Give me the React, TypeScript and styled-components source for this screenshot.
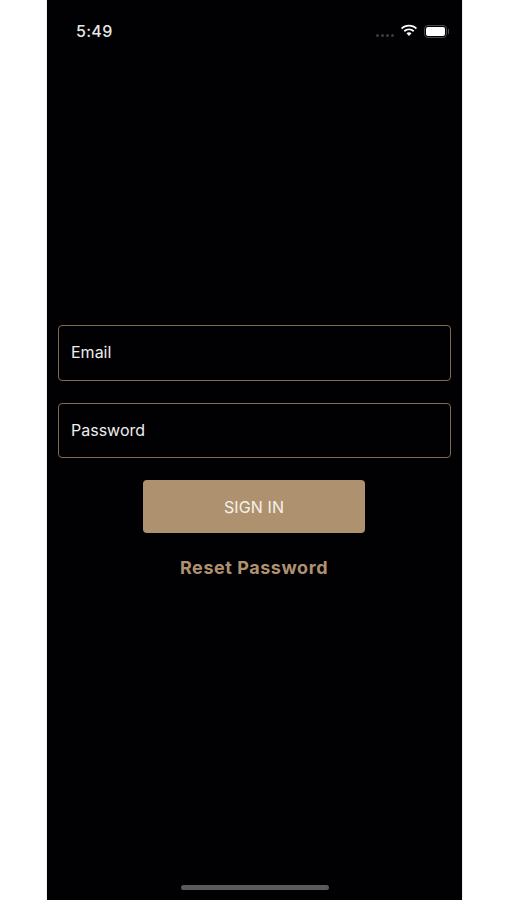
import type { FC } from "react";
import styled, { createGlobalStyle } from "styled-components";

const GlobalStyle = createGlobalStyle`
  html, body {
    margin: 0;
    padding: 0;
    background: #ffffff;
    font-family: Inter, "Liberation Sans", sans-serif;
  }
`;

const App: FC = () => {
  return (
    <>
      <GlobalStyle />
      <Page>
        <Phone>
          <StatusBar>
            <Time>5:49</Time>
            <StatusIcons>
              <Signal>
                <i />
                <i />
                <i />
                <i />
              </Signal>
              <svg width="18" height="14" viewBox="0 0 18 14">
                <path
                  d="M9 2.6c2.6 0 5 1 6.8 2.7l1.2-1.3C14.9 2 12.1.8 9 .8S3.1 2 1 4l1.2 1.3C4 3.6 6.4 2.6 9 2.6z"
                  fill="#fff"
                />
                <path
                  d="M9 6.3c1.6 0 3 .6 4.1 1.6l1.2-1.3C12.9 5.3 11 4.5 9 4.5s-3.9.8-5.3 2.1l1.2 1.3C6 6.9 7.4 6.3 9 6.3z"
                  fill="#fff"
                />
                <path d="M9 8.2c-1 0-1.8.4-2.5 1L9 12l2.5-2.8c-.7-.6-1.5-1-2.5-1z" fill="#fff" />
              </svg>
              <Battery>
                <BatteryFill />
              </Battery>
            </StatusIcons>
          </StatusBar>
          <Form>
            <Field>Email</Field>
            <Field>Password</Field>
            <SignIn>SIGN IN</SignIn>
            <Reset>Reset Password</Reset>
          </Form>
          <HomeIndicator />
        </Phone>
      </Page>
    </>
  );
};

const Page = styled.div`
  width: 507px;
  height: 900px;
  padding-left: 47px;
  box-sizing: border-box;
  overflow: hidden;
`;

const Phone = styled.div`
  width: 415px;
  height: 900px;
  background: #010002;
  display: flex;
  flex-direction: column;
  box-shadow: 0 0 1px #9a9a9a;
`;

const StatusBar = styled.div`
  height: 62px;
  flex: none;
  display: flex;
  align-items: center;
  justify-content: space-between;
  padding: 0 15px 0 29px;
`;

const Time = styled.div`
  color: #e6e6e6;
  font-size: 16px;
  font-weight: 500;
  letter-spacing: 0.3px;
`;

const StatusIcons = styled.div`
  display: flex;
  align-items: center;
  gap: 6px;
`;

const Signal = styled.div`
  display: flex;
  gap: 2px;
  margin: 8px 0 0 0;

  > i {
    display: block;
    width: 3px;
    height: 3px;
    border-radius: 50%;
    background: #3c3c3c;
  }
`;

const Battery = styled.div`
  position: relative;
  width: 23px;
  height: 13px;
  padding: 1px;
  box-sizing: border-box;
  border: 1px solid #4a4a4a;
  border-radius: 4px;

  &::after {
    content: "";
    position: absolute;
    right: -3px;
    top: 3px;
    width: 1.5px;
    height: 5px;
    background: #4a4a4a;
  }
`;

const BatteryFill = styled.div`
  width: 100%;
  height: 100%;
  background: #fff;
  border-radius: 2px;
`;

const Form = styled.div`
  flex: 1;
  display: flex;
  flex-direction: column;
  align-items: center;
  padding: 263px 11px 0;
`;

const Field = styled.div`
  width: 393px;
  height: 55.5px;
  box-sizing: border-box;
  display: flex;
  align-items: center;
  padding: 0 0 1px 12px;
  margin-bottom: 22px;
  border: 1px solid #7f6a52;
  border-radius: 4px;
  color: #eeeeee;
  font-size: 16px;
`;

const SignIn = styled.div`
  width: 222px;
  height: 53px;
  flex: none;
  margin-right: 1px;
  box-sizing: border-box;
  display: flex;
  align-items: center;
  justify-content: center;
  background: #ae926f;
  border-radius: 4px;
  color: #f6f1ea;
  font-size: 16px;
  letter-spacing: 0.1px;
`;

const Reset = styled.div`
  margin: 24px 1px 0 0;
  color: #ae926f;
  font-size: 18px;
  font-weight: 700;
  letter-spacing: 0.55px;
`;

const HomeIndicator = styled.div`
  flex: none;
  width: 148px;
  height: 5px;
  margin: 0 auto 10px;
  background: #5a5a5a;
  border-radius: 3px;
`;

export default App;
